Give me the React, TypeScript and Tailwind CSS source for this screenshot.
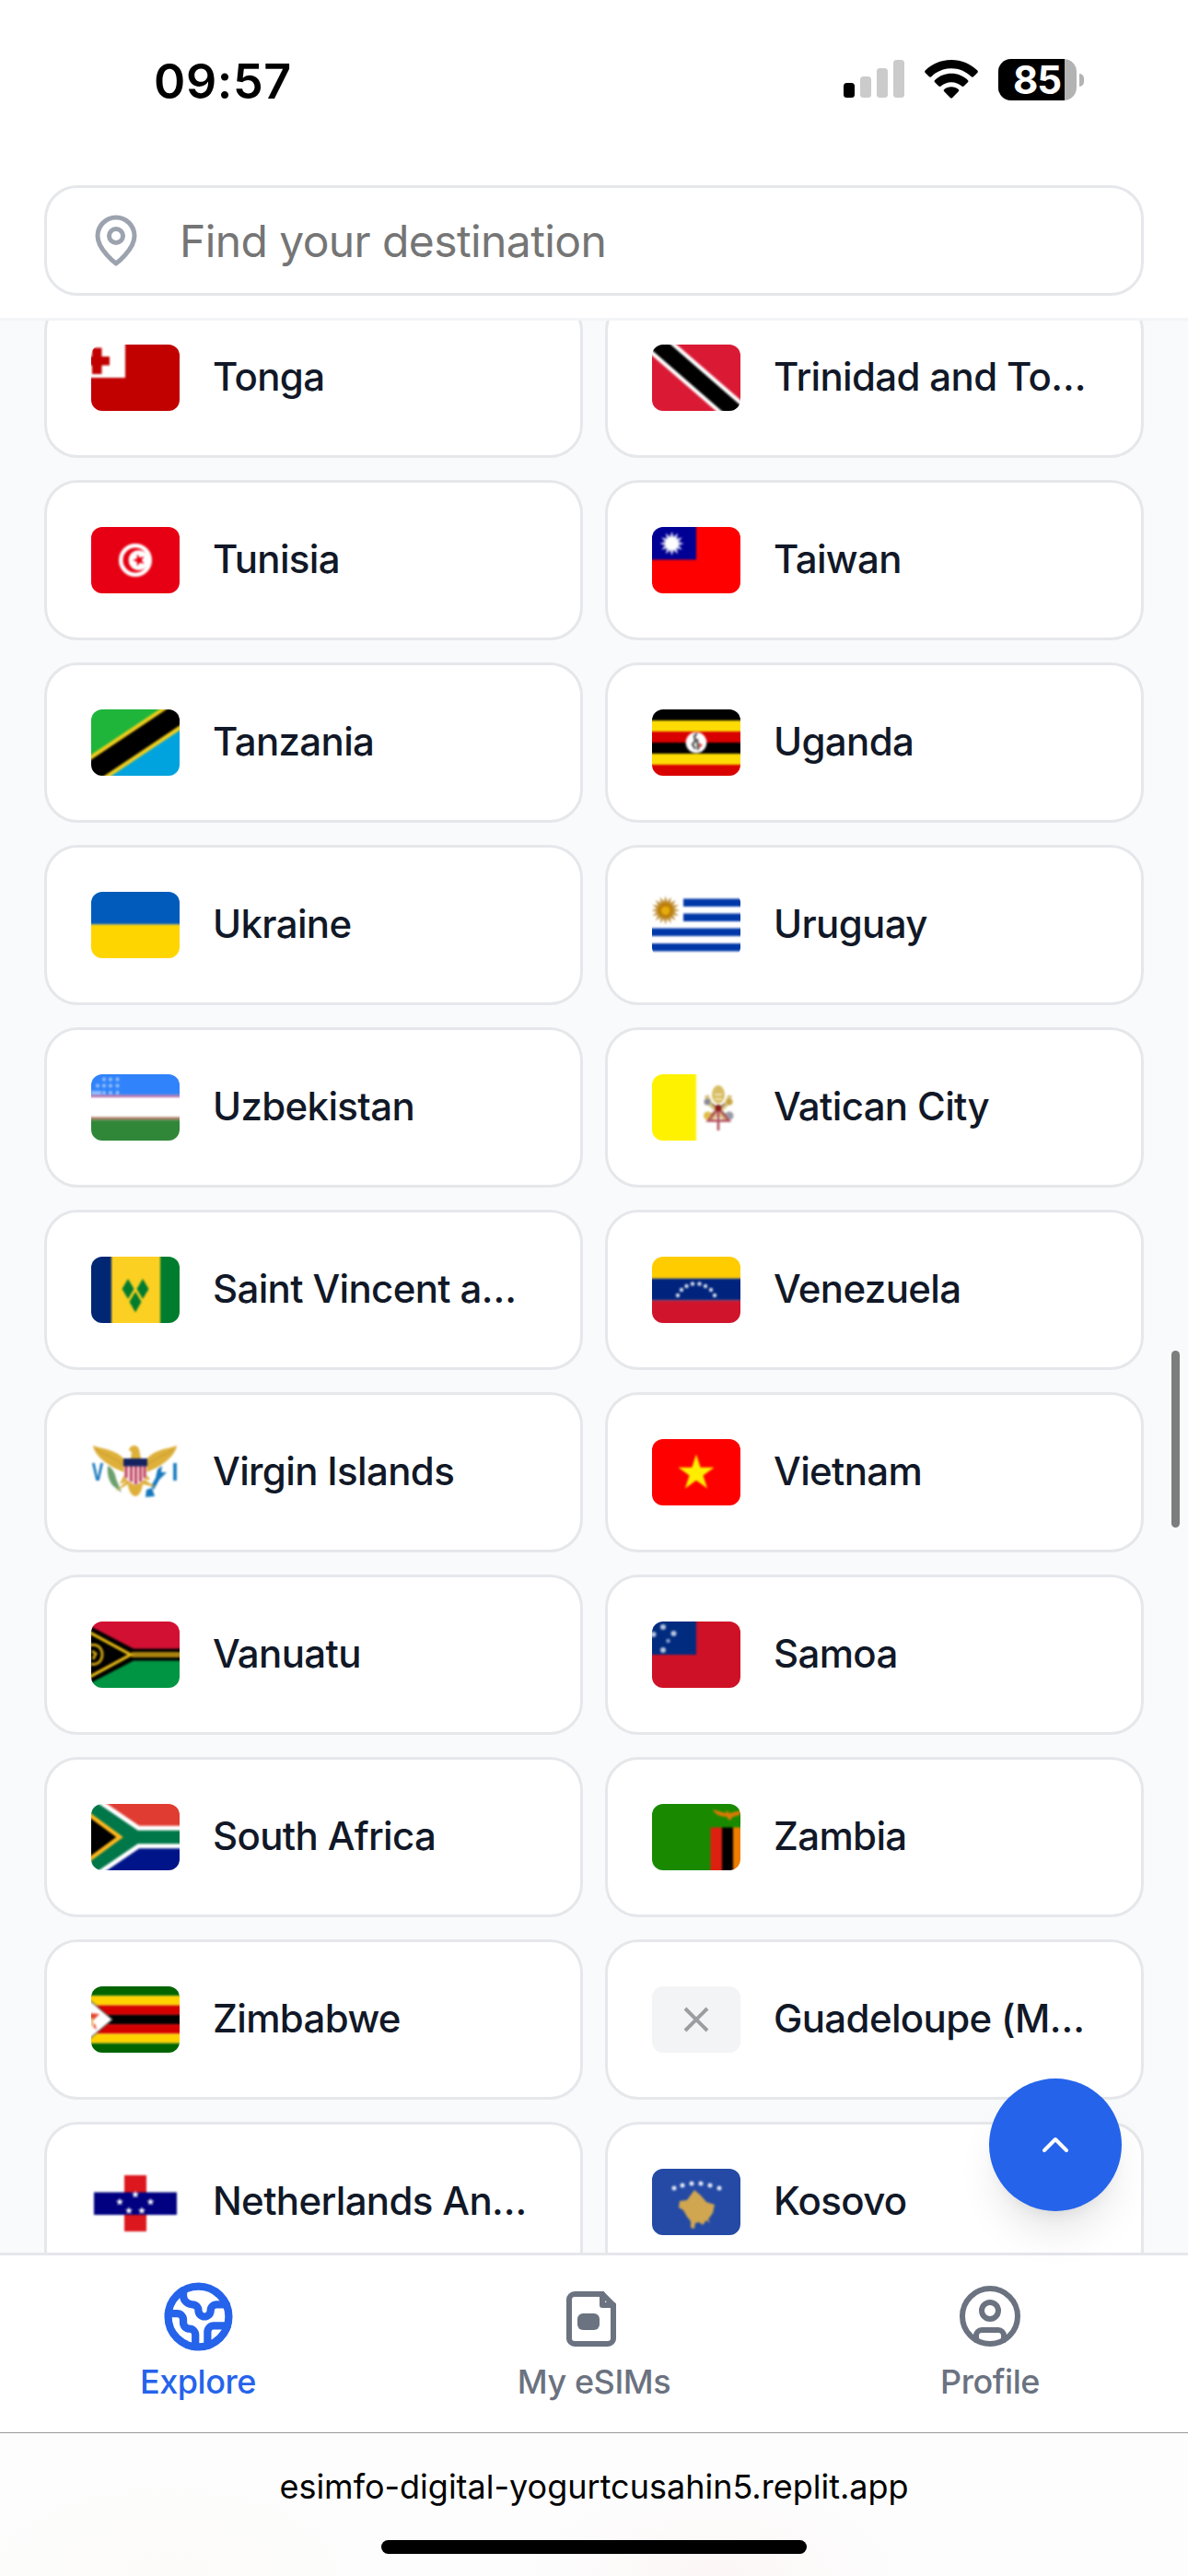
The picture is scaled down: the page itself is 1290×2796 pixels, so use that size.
import React from "react";
import type { ReactNode } from "react";

const star = (cx: number, cy: number, r: number, n = 5, inner = 0.382, rot = -90) =>
  Array.from({ length: n * 2 }, (_, i) => {
    const a = ((rot + (i * 180) / n) * Math.PI) / 180;
    const k = i % 2 ? r * inner : r;
    return `${(cx + k * Math.cos(a)).toFixed(2)},${(cy + k * Math.sin(a)).toFixed(2)}`;
  }).join(" ");

/** Full-width horizontal stripes given as [top, bottom, colour]. */
const bands = (list: [number, number, string][]) =>
  list.map(([a, b, c]) => <rect key={a} x="-9" y={a} width="114" height={b - a} fill={c} />);

const dots = (list: number[][], r: number, fill = "#fff") =>
  list.map(([x, y]) => <circle key={`${x}-${y}`} cx={x} cy={y} r={r} fill={fill} />);

const flags: Record<string, ReactNode> = {
  tonga: (
    <>
      {bands([[-9, 81, "#c10000"]])}
      <rect x="-9" y="-9" width="46" height="45" fill="#fff" />
      <path d="M-9 13H20V22.5H-9zM1 3.5H11.5V32H1z" fill="#c10000" />
    </>
  ),
  trinidad: (
    <>
      {bands([[-9, 81, "#da1a35"]])}
      <path d="M-52 -51L148 123" stroke="#fff" strokeWidth="26.4" />
      <path d="M-52 -51L148 123" stroke="#000" strokeWidth="18" />
    </>
  ),
  tunisia: (
    <>
      {bands([[-9, 81, "#e70013"]])}
      <circle cx="48" cy="36" r="18" fill="#fff" />
      <circle cx="48" cy="36" r="13.5" fill="#e70013" />
      <circle cx="51.5" cy="36" r="10.8" fill="#fff" />
      <polygon points={star(52, 36, 7, 5, 0.4, 180)} fill="#e70013" />
    </>
  ),
  taiwan: (
    <>
      {bands([[-9, 81, "#fe0000"]])}
      <rect x="-9" y="-9" width="57" height="44.5" fill="#000095" />
      <polygon points={star(21.5, 18, 13, 12, 0.6)} fill="#fff" opacity="0.8" />
      <circle cx="21.5" cy="18" r="7" fill="#fff" />
    </>
  ),
  tanzania: (
    <>
      {bands([[-9, 81, "#1eb53a"]])}
      <path d="M-12 90.7L110 9.4V90z" fill="#00a3dd" />
      <path d="M-60 108L156 -36" stroke="#f0cd1c" strokeWidth="31" />
      <path d="M-60 108L156 -36" stroke="#000" strokeWidth="22.6" />
    </>
  ),
  uganda: (
    <>
      {bands([
        [-9, 12, "#000"],
        [12, 24, "#fcdc04"],
        [24, 36, "#d90000"],
        [36, 48, "#000"],
        [48, 60, "#fcdc04"],
        [60, 81, "#d90000"],
      ])}
      <circle cx="48" cy="36" r="11.3" fill="#fff" />
      <path d="M49 26l-3 3 1 5-3 4 3 5M49 32l1 12" fill="none" stroke="#555" strokeWidth="2.4" />
      <path d="M51 36l4 3-4 3z" fill="#e0443c" />
    </>
  ),
  ukraine: bands([
    [-9, 35.5, "#005bbb"],
    [35.5, 81, "#ffd500"],
  ]),
  uruguay: (
    <>
      {bands([
        [-9, 81, "#fff"],
        [7.5, 16, "#0038a8"],
        [23.5, 32, "#0038a8"],
        [39.5, 48, "#0038a8"],
        [56, 64.5, "#0038a8"],
      ])}
      <rect x="-9" y="-9" width="43" height="46" fill="#fff" />
      <polygon points={star(14.7, 20, 15.5, 16, 0.62)} fill="#c29441" />
      <circle cx="14.7" cy="20" r="8.5" fill="#bd7f0b" />
      <circle cx="14.7" cy="20.5" r="4.6" fill="#e5ad0c" />
    </>
  ),
  uzbekistan: (
    <>
      {bands([
        [-9, 22.5, "#3083fa"],
        [22.5, 25, "#b46aa8"],
        [25, 46.5, "#fff"],
        [46.5, 49.5, "#a5735c"],
        [49.5, 81, "#308738"],
      ])}
      {dots([[14, 5.5], [21, 5.5], [28.5, 5.5], [7, 12.5], [14, 12.5], [21, 12.5], [28.5, 12.5], [14, 20], [21, 20], [28.5, 20]], 1.9, "#a0c7fd")}
      <rect x="0" y="18" width="11" height="4" fill="#8fbcfc" />
    </>
  ),
  vatican: (
    <>
      {bands([[-9, 81, "#fff"]])}
      <rect x="-9" y="-9" width="57" height="90" fill="#fff200" />
      <path d="M59 23l4 9 18 18M85 23l-4 9-18 18" fill="none" stroke="#d9c583" strokeWidth="5" />
      <ellipse cx="72" cy="22" rx="7" ry="10" fill="#d8bd62" />
      <path d="M68 22h8M68 27h8" stroke="#f5eed2" strokeWidth="1.5" />
      <circle cx="60" cy="30" r="3.5" fill="#8b8b93" />
      <circle cx="84" cy="30" r="3.5" fill="#c6a540" />
      <circle cx="60.5" cy="45" r="4.5" fill="#e0bd4a" />
      <circle cx="84" cy="45" r="4.5" fill="#9a9aa5" />
      <path d="M65 32l15 12M79 32L64 44" stroke="#8d7a52" strokeWidth="2" />
      <path d="M72 35V61M72 37L61 50.5H83.5z" fill="none" stroke="#b4505c" strokeWidth="2.6" />
      <circle cx="72" cy="36.5" r="3.5" fill="#8c1d1d" />
    </>
  ),
  vincent: (
    <>
      {bands([[-9, 81, "#fcd022"]])}
      <rect x="-9" y="-9" width="31" height="90" fill="#002674" />
      <rect x="75" y="-9" width="31" height="90" fill="#007c2e" />
      <path d="M40 24l6.5 11-6.5 11-6.5-11zM56 24l6.5 11-6.5 11-6.5-11zM48 38l6.5 11-6.5 11.5-6.5-11.5z" fill="#007c2e" />
    </>
  ),
  venezuela: (
    <>
      {bands([
        [-9, 23.7, "#ffcc00"],
        [23.7, 47.5, "#00247d"],
        [47.5, 81, "#cf142b"],
      ])}
      {dots([[28, 42], [32, 36], [37.5, 32], [44, 29.5], [51.5, 29.5], [58, 32], [64, 36], [68, 42]], 2.2, "#d5dbea")}
    </>
  ),
  virgin: (
    <>
      {bands([[-9, 81, "#fff"]])}
      <path d="M18 29c5 2 8 8 9 14l6 15-9-7c-5-5-7-14-6-22z" fill="#6ca06c" />
      <path d="M72 33l5-4-1 7 6 0-8 8-6 11-3-4 5-9zM66 53l3 9-10 1 1-8z" fill="#1678bd" />
      <path d="M2 7C14 11 28 12 36 22V36C22 31 4 20 2 7zM93 7C81 11 67 12 60 22V36C74 31 91 20 93 7z" fill="#deb03a" />
      <path d="M5 11C15 18 25 20 35 28M90 11C80 18 70 20 61 28" fill="none" stroke="#c49530" strokeWidth="1" />
      <path d="M41 12c1-6 9-7 11-1l2 10H43l1-7zM37 36l-6 13 7-3-12 11 14-8c0 6 4 13 8 13s7-6 8-13l14 3-12-8 6 0-7-10z" fill="#deb03a" />
      <path d="M35.5 29H60.5V38C60.5 44 53 48 48 50C43 48 35.5 44 35.5 38z" fill="#f3d8df" />
      <path d="M38 29v13M43.5 29v17M48.5 29v20M53.5 29v17M58 29v13" stroke="#bd3855" strokeWidth="2.6" />
      <rect x="35" y="21" width="26" height="8.5" fill="#14235f" />
      <text x="0.5" y="45" fontFamily="Inter, sans-serif" fontSize="25" fontWeight="700" textLength="13" lengthAdjust="spacingAndGlyphs" fill="#1678bd">V</text>
      <text x="87.5" y="45" fontFamily="Inter, sans-serif" fontSize="25" fontWeight="700" fill="#1678bd">I</text>
    </>
  ),
  vietnam: (
    <>
      {bands([[-9, 81, "#fe0000"]])}
      <polygon points={star(48, 37, 20.5)} fill="#ffee00" />
    </>
  ),
  vanuatu: (
    <>
      {bands([
        [-9, 36, "#d21034"],
        [36, 81, "#009543"],
      ])}
      <path d="M-9 1L46 29.5H105V42.5H46L-9 71z" fill="#000" />
      <path d="M44 36H105" stroke="#a8820f" strokeWidth="6" />
      <path d="M-6 9.5L43 36L-6 62.5" fill="none" stroke="#e3b713" strokeWidth="3.2" />
      <path d="M-3 26c10-3 15 3 15 10s-6 12-12 10M1 32l4 3-3 6" fill="none" stroke="#c9a011" strokeWidth="3" />
    </>
  ),
  samoa: (
    <>
      {bands([[-9, 81, "#ce1126"]])}
      <rect x="-9" y="-9" width="57" height="45" fill="#002b7f" />
      {dots([[12, 6], [1.5, 14], [23.5, 13], [12, 31]], 3, "#b7c4de")}
      {dots([[17.5, 21]], 2.2, "#8fa2cc")}
    </>
  ),
  southAfrica: (
    <>
      {bands([
        [-9, 36, "#e03c31"],
        [36, 81, "#001489"],
      ])}
      <path d="M-18 -21L51.5 26.3H105V45.7H51.5L-18 93" fill="#007749" stroke="#fff" strokeWidth="5" />
      <path d="M-9 6.5L31 36L-9 65.5z" fill="#000" stroke="#ffb81c" strokeWidth="4.5" />
    </>
  ),
  zambia: (
    <>
      {bands([[-9, 81, "#198a00"]])}
      <rect x="63.5" y="25.5" width="12.5" height="56" fill="#de2010" />
      <rect x="76" y="25.5" width="12" height="56" fill="#000" />
      <rect x="88" y="25.5" width="18" height="56" fill="#ef7d00" />
      <path d="M66 6l14 4 1-3 3 3 13-3-2 5-7 2-4 4-3-4c-7 0-13-3-15-8z" fill="#d97904" />
    </>
  ),
  zimbabwe: (
    <>
      {bands([
        [-9, 10.3, "#006400"],
        [10.3, 20.6, "#ffd200"],
        [20.6, 30.9, "#d40000"],
        [30.9, 41.1, "#000"],
        [41.1, 51.4, "#d40000"],
        [51.4, 61.7, "#ffd200"],
        [61.7, 81, "#006400"],
      ])}
      <path d="M-9 9L23 36L-9 63z" fill="#fff" stroke="#555" strokeWidth="1.2" />
      <path d="M-4 29l13 1-6 6 3 11-8-6z" fill="#e8442c" />
      <path d="M-2 35l7 2-3 8-5-2z" fill="#fff" />
      <path d="M1 34v9" stroke="#e7b35b" strokeWidth="2.5" />
    </>
  ),
  antilles: (
    <>
      {bands([[-9, 81, "#fff"]])}
      <rect x="36" y="7" width="24" height="61" fill="#dc171d" />
      <rect x="3" y="25.5" width="90" height="24.5" fill="#000080" />
      {[[31, 36], [64.5, 36], [48, 28], [41, 45.5], [55, 45.5]].map(([x, y]) => (
        <polygon key={x} points={star(x, y, 4.2, 5, 0.42)} fill="#fff" />
      ))}
    </>
  ),
  kosovo: (
    <>
      {bands([[-9, 81, "#244aa5"]])}
      <path d="M46 23l7 6 6 7 9 3-2 9-5 7 2 4-4-3-4 5-4-3-4 1-1 6-4-1 0-7-4-5-4-7-5-3 1-7 8-1z" fill="#d0a650" />
      {dots([[24, 21], [33, 18], [43, 16], [53, 16], [63, 18], [73, 21]], 2.5, "#e4e9f4")}
    </>
  ),
};

function Flag({ id }: { id: string }) {
  return (
    <svg viewBox="0 0 96 72" className="h-[72px] w-24 shrink-0 overflow-hidden rounded-xl" aria-hidden="true">
      <filter id={`soft-${id}`} x="-10%" y="-10%" width="120%" height="120%" colorInterpolationFilters="sRGB">
        <feGaussianBlur stdDeviation="0.8" />
      </filter>
      <g filter={`url(#soft-${id})`}>{flags[id]}</g>
    </svg>
  );
}

function MissingFlag() {
  return (
    <div className="flex h-[72px] w-24 shrink-0 items-center justify-center rounded-xl bg-[#f3f4f6]">
      <svg viewBox="0 0 28 28" className="size-7" fill="none" stroke="#9b9da1" strokeWidth="4" aria-hidden="true">
        <path d="M2 2L26 26M26 2L2 26" />
      </svg>
    </div>
  );
}

const destinations: { flag?: string; name: string }[] = [
  { flag: "tonga", name: "Tonga" },
  { flag: "trinidad", name: "Trinidad and Tobago" },
  { flag: "tunisia", name: "Tunisia" },
  { flag: "taiwan", name: "Taiwan" },
  { flag: "tanzania", name: "Tanzania" },
  { flag: "uganda", name: "Uganda" },
  { flag: "ukraine", name: "Ukraine" },
  { flag: "uruguay", name: "Uruguay" },
  { flag: "uzbekistan", name: "Uzbekistan" },
  { flag: "vatican", name: "Vatican City" },
  { flag: "vincent", name: "Saint Vincent and the Grenadines" },
  { flag: "venezuela", name: "Venezuela" },
  { flag: "virgin", name: "Virgin Islands" },
  { flag: "vietnam", name: "Vietnam" },
  { flag: "vanuatu", name: "Vanuatu" },
  { flag: "samoa", name: "Samoa" },
  { flag: "southAfrica", name: "South Africa" },
  { flag: "zambia", name: "Zambia" },
  { flag: "zimbabwe", name: "Zimbabwe" },
  { name: "Guadeloupe (Martinique)" },
  { flag: "antilles", name: "Netherlands Antilles" },
  { flag: "kosovo", name: "Kosovo" },
];

function StatusBar() {
  return (
    <div className="flex h-[201px] items-start justify-between pt-[58px] pr-[113px] pl-[167px]">
      <span className="pt-px text-[52px] leading-[60px] font-semibold tracking-[0.6px] text-black">09:57</span>
      <div className="flex h-[56px] items-center">
        <svg viewBox="0 0 66 42" className="h-[42px] w-[66px]" aria-hidden="true">
          <rect x="0" y="25" width="12" height="16" rx="3.5" fill="#000" />
          <rect x="18" y="18" width="12" height="23" rx="3.5" fill="#cbcbcb" />
          <rect x="36" y="9" width="12" height="32" rx="3.5" fill="#cbcbcb" />
          <rect x="54" y="0" width="12" height="41" rx="3.5" fill="#cbcbcb" />
        </svg>
        <svg viewBox="0 0 58 42" className="ml-[22px] h-[42px] w-[58px]" aria-hidden="true">
          <path d="M29 0C40 0 50 4.300 57.300 11.500c.7.700.7 1.700 0 2.400L53 18.200c-.6.600-1.600.6-2.300 0C45 12.500 37.300 9.200 29 9.200S13 12.500 7.300 18.200c-.7.600-1.700.6-2.300 0L.7 13.900c-.7-.7-.7-1.700 0-2.400C8 4.300 18 0 29 0z" />
          <path d="M29 14.800c6.900 0 13.200 2.700 17.900 7.100.7.700.7 1.800 0 2.400l-4.300 4.300c-.6.600-1.600.7-2.300 0C37.300 25.900 33.300 24.200 29 24.200s-8.300 1.700-11.300 4.400c-.7.700-1.700.6-2.300 0l-4.300-4.300c-.7-.6-.7-1.700 0-2.400C15.800 17.500 22.100 14.800 29 14.800z" />
          <path d="M29 29.200c3 0 5.600 1 7.700 2.700.7.600.8 1.600.1 2.300l-6.600 6.700c-.7.700-1.700.7-2.400 0l-6.600-6.700c-.7-.7-.6-1.700.1-2.300 2.100-1.700 4.700-2.700 7.700-2.700z" />
        </svg>
        <div className="relative ml-[22px] h-[45px] w-[93px]">
          <div className="flex h-[45px] w-[85px] overflow-hidden rounded-[14px] bg-[#b3b3b3]">
            <span className="w-[72px] bg-black pl-[16px] text-[42px] leading-[46px] font-bold tracking-[-1.2px] text-white">85</span>
          </div>
          <span className="absolute top-[16px] right-0 h-[14px] w-[5px] rounded-r-full bg-[#b3b3b3]" />
        </div>
      </div>
    </div>
  );
}

function SearchField() {
  return (
    <div className="mx-12 flex h-[120px] items-center rounded-[36px] border-[3px] border-[#e5e7eb] bg-white pl-[45px]">
      <svg viewBox="0 0 24 24" className="size-[60px]" fill="none" stroke="#9ca3af" strokeWidth="2" strokeLinecap="round" strokeLinejoin="round" aria-hidden="true">
        <path d="M20 10c0 6-8 12-8 12s-8-6-8-12a8 8 0 0 1 16 0Z" />
        <circle cx="12" cy="10" r="3" />
      </svg>
      <span className="ml-[39px] pt-0.5 text-[48px] leading-[72px] tracking-[-0.6px] text-[#757575]">Find your destination</span>
    </div>
  );
}

function NavItem({ label, active, children }: { label: string; active?: boolean; children: ReactNode }) {
  return (
    <div className={`flex flex-1 flex-col items-center gap-[11px] pt-[30px] ${active ? "text-[#2563eb]" : "text-[#6b7280]"}`}>
      <div className="flex size-[72px] items-center justify-center">{children}</div>
      <span className="text-4xl leading-[48px] font-medium tracking-[-0.45px]">{label}</span>
    </div>
  );
}

function BottomNav() {
  const stroke = { fill: "none", stroke: "currentColor", strokeLinecap: "round", strokeLinejoin: "round" } as const;
  return (
    <nav className="flex h-[195px] border-t-[3px] border-[#e5e7eb] bg-white">
      <NavItem label="Explore" active>
        <svg viewBox="0 0 24 24" className="size-[79px] shrink-0" {...stroke} strokeWidth="2.5">
          <path d="M21.54 15H17a2 2 0 0 0-2 2v4.54" />
          <path d="M7 3.34V5a3 3 0 0 0 3 3a2 2 0 0 1 2 2c0 1.100.9 2 2 2a2 2 0 0 0 2-2c0-1.100.9-2 2-2h3.170" />
          <path d="M11 21.950V18a2 2 0 0 0-2-2a2 2 0 0 1-2-2v-1a2 2 0 0 0-2-2H2.050" />
          <circle cx="12" cy="12" r="10" />
        </svg>
      </NavItem>
      <NavItem label="My eSIMs">
        <svg viewBox="0 0 24 24" className="size-[72px]" {...stroke} strokeWidth="2">
          <path d="M15 4H5a2 2 0 0 0-2 2v14a2 2 0 0 0 2 2h12a2 2 0 0 0 2-2V8z" strokeLinejoin="miter" />
          <path d="M15 4v4h4" />
          <rect x="6" y="11" width="8" height="6" rx="2" fill="currentColor" stroke="none" />
        </svg>
      </NavItem>
      <NavItem label="Profile">
        <svg viewBox="0 0 24 24" className="size-[72px]" {...stroke} strokeWidth="2">
          <circle cx="12" cy="12" r="10" />
          <circle cx="12" cy="10" r="3" />
          <path d="M7 20.662V19a2 2 0 0 1 2-2h6a2 2 0 0 1 2 2v1.662" />
        </svg>
      </NavItem>
    </nav>
  );
}

export default function App() {
  return (
    <div className="relative flex h-[2796px] w-[1290px] flex-col overflow-hidden bg-[#f9fafb] font-['Inter',sans-serif]">
      <header className="h-[348px] shrink-0 border-b-[3px] border-[#f3f4f6] bg-white">
        <StatusBar />
        <SearchField />
      </header>

      <main className="min-h-0 flex-1 overflow-hidden px-12">
        <div className="-mt-[25px] grid grid-cols-2 gap-6">
          {destinations.map((d) => (
            <div key={d.name} className="flex h-[174px] min-w-0 items-center gap-9 rounded-[36px] border-[3px] border-[#e5e7eb] bg-white px-12">
              {d.flag ? <Flag id={d.flag} /> : <MissingFlag />}
              <span className="mb-0.5 min-w-0 flex-1 truncate text-[42px] leading-[60px] font-medium tracking-[-0.65px] text-[#111827]">{d.name}</span>
            </div>
          ))}
        </div>
      </main>

      <BottomNav />

      <footer className="flex h-[156px] shrink-0 flex-col items-center border-t border-[#999] bg-[#fdfdfd] bg-[radial-gradient(ellipse_200px_100px_at_60%_100%,#fcf6f6,transparent),radial-gradient(ellipse_220px_110px_at_14%_100%,#fcfbf9,transparent)] pt-[34px]">
        <span className="text-[36px] leading-[48px] text-black">esimfo-digital-yogurtcusahin5.replit.app</span>
        <div className="mt-[34px] h-[15px] w-[462px] rounded-full bg-black" />
      </footer>

      <button
        aria-label="Scroll to top"
        className="absolute top-[2256px] right-[72px] flex size-36 items-center justify-center rounded-full bg-[#2563eb] shadow-[0_30px_45px_-9px_rgba(0,0,0,0.1),0_12px_18px_-12px_rgba(0,0,0,0.1)]"
      >
        <svg viewBox="0 0 24 24" className="size-12" fill="none" stroke="#fff" strokeWidth="2" strokeLinecap="round" strokeLinejoin="round">
          <path d="m18 15-6-6-6 6" />
        </svg>
      </button>
      <div className="absolute top-[1466px] right-[9px] h-48 w-[9px] rounded-full bg-[#7d7d7d]" />
    </div>
  );
}
